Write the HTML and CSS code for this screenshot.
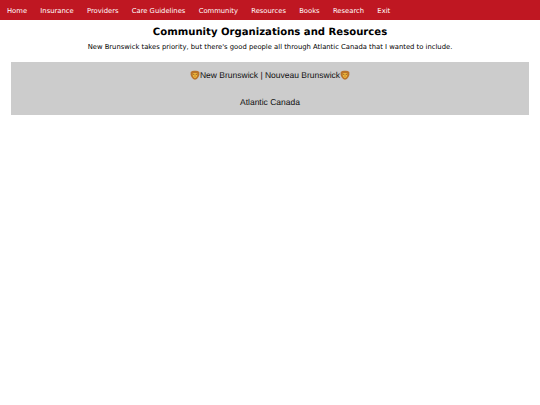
FILE: index.html
```html
<!DOCTYPE html>
<html>
<head>
    <title>Community Organizations and Resources</title>
    <meta charset="UTF-8">
    <link rel="stylesheet" href="styles.css">
</head>
<body>
    <nav class="topnav">
        <a href="#">Home</a>
        <a href="#">Insurance</a>
        <a href="#">Providers</a>
        <a href="#">Care Guidelines</a>
        <a href="#">Community</a>
        <a href="#">Resources</a>
        <a href="#">Books</a>
        <a href="#">Research</a>
        <a href="#">Exit</a>
    </nav>
    <h1>Community Organizations and Resources</h1>
    <p class="intro">New Brunswick takes priority, but there's good people all through Atlantic Canada that I wanted to include.</p>
    <div class="accordion">
        <button class="accordion-btn">
            <svg class="lion" viewBox="0 0 12 12"><path class="mane" d="M.8 2.500Q3 .5 6 1Q9 .5 11.200 2.500Q11.800 5.500 10.200 8.500Q8.500 11.500 6 11.600Q3.500 11.500 1.800 8.500Q.2 5.500 .8 2.500Z"/><path class="face" d="M3.200 4.300Q6 3 8.800 4.300Q9 7 7.900 8.400Q7 9.600 6 9.600Q5 9.600 4.100 8.400Q3 7 3.200 4.300Z"/><path class="eyes" d="M4 5h1.100v.9H4ZM6.900 5H8v.9H6.900ZM5.200 7h1.600L6 8.200Z"/></svg>New Brunswick | Nouveau Brunswick<svg class="lion" viewBox="0 0 12 12"><path class="mane" d="M.8 2.500Q3 .5 6 1Q9 .5 11.200 2.500Q11.800 5.500 10.200 8.500Q8.500 11.500 6 11.600Q3.500 11.500 1.800 8.500Q.2 5.500 .8 2.500Z"/><path class="face" d="M3.200 4.300Q6 3 8.800 4.300Q9 7 7.900 8.400Q7 9.600 6 9.600Q5 9.600 4.100 8.400Q3 7 3.200 4.300Z"/><path class="eyes" d="M4 5h1.100v.9H4ZM6.900 5H8v.9H6.900ZM5.200 7h1.600L6 8.200Z"/></svg>
        </button>
        <button class="accordion-btn">Atlantic Canada</button>
    </div>
</body>
</html>
```

FILE: styles.css
```css
body {
    margin: 0;
    padding: 0;
    background-color: #fff;
    color: #000;
    font-family: "DejaVu Sans", sans-serif;
    text-rendering: geometricPrecision;
}
.topnav {
    display: flex;
    align-items: center;
    gap: 13.25px;
    height: 19px;
    padding: 1px 7px 0;
    background-color: #bf1722;
}
.topnav a {
    color: #fff;
    font-size: 6.8px;
    text-decoration: none;
}
h1 {
    margin: 6px 0 0;
    font-size: 10.1px;
    line-height: 14px;
    text-align: center;
}
.intro {
    margin: 1.5px 0 0;
    font-size: 6.8px;
    line-height: 10px;
    text-align: center;
}
.accordion {
    margin: 10.5px 11px 0;
}
.accordion-btn {
    display: flex;
    align-items: center;
    justify-content: center;
    width: 100%;
    height: 26.6px;
    padding: 0;
    border: none;
    background-color: #ccc;
    color: #111;
    font-family: "Liberation Sans", sans-serif;
    font-size: 8.5px;
    text-rendering: geometricPrecision;
}
.lion {
    width: 10px;
    height: 10px;
}
.mane {
    fill: #b9742a;
}
.face {
    fill: #f2b93f;
}
.eyes {
    fill: #5a3410;
}
```
